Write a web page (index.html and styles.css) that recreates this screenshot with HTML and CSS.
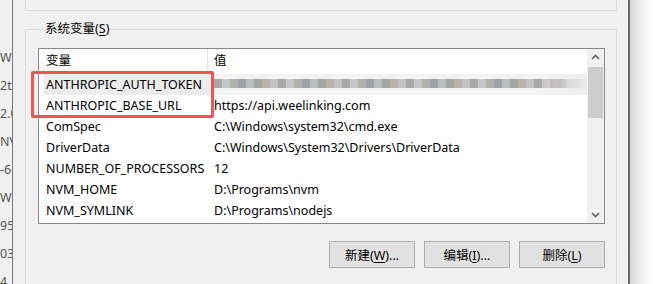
FILE: index.html
```html
<!DOCTYPE html>
<html>

<head>
    <meta http-equiv="Content-Type" content="text/html;charset=UTF-8">
    <title>环境变量</title>
    <link rel="stylesheet" href="styles.css">
</head>

<body>
    <div class="behind">
        <p>WINDIR</p>
        <p>2th</p>
        <p>2.0</p>
        <p>NVM</p>
        <p>-66</p>
        <p>WD</p>
        <p>95</p>
        <p>03</p>
        <p>4</p>
    </div>
    <div class="edge"></div>

    <div class="dialog">
        <div class="prev-group"></div>

        <div class="group">
            <span class="legend">系统变量(<u>S</u>)</span>

            <div class="list">
                <div class="list-body">
                    <div class="head">
                        <div class="col1">变量</div>
                        <div class="col2">值</div>
                    </div>
                    <div class="row sel">
                        <div class="col1">ANTHROPIC_AUTH_TOKEN</div>
                        <div class="col2"><div class="blur"></div></div>
                    </div>
                    <div class="row">
                        <div class="col1">ANTHROPIC_BASE_URL</div>
                        <div class="col2">https://api.weelinking.com</div>
                    </div>
                    <div class="row">
                        <div class="col1">ComSpec</div>
                        <div class="col2">C:\Windows\system32\cmd.exe</div>
                    </div>
                    <div class="row">
                        <div class="col1">DriverData</div>
                        <div class="col2">C:\Windows\System32\Drivers\DriverData</div>
                    </div>
                    <div class="row">
                        <div class="col1">NUMBER_OF_PROCESSORS</div>
                        <div class="col2">12</div>
                    </div>
                    <div class="row">
                        <div class="col1">NVM_HOME</div>
                        <div class="col2">D:\Programs\nvm</div>
                    </div>
                    <div class="row">
                        <div class="col1">NVM_SYMLINK</div>
                        <div class="col2">D:\Programs\nodejs</div>
                    </div>
                </div>
                <div class="scrollbar">
                    <svg width="17" height="17" viewBox="0 0 17 17"><path d="M5 10 L8.5 6.5 L12 10" fill="none" stroke="#606060" stroke-width="1.6"/></svg>
                    <div class="track"><div class="thumb"></div></div>
                    <svg width="17" height="17" viewBox="0 0 17 17"><path d="M5 7 L8.5 10.5 L12 7" fill="none" stroke="#606060" stroke-width="1.6"/></svg>
                </div>
                <div class="mark"></div>
            </div>

            <div class="buttons">
                <button class="btn">新建(<u>W</u>)...</button>
                <button class="btn">编辑(<u>I</u>)...</button>
                <button class="btn">删除(<u>L</u>)</button>
            </div>
        </div>
    </div>

    <div class="edge dark"></div>
    <div class="shadow"></div>
</body>

</html>
```

FILE: styles.css
```css
* {
    box-sizing: border-box;
    margin: 0;
    padding: 0;
}

body {
    width: 653px;
    height: 284px;
    overflow: hidden;
    display: flex;
    background: #ffffff;
    font-family: "Noto Sans", "Noto Sans CJK SC", sans-serif;
    font-size: 12.5px;
    color: #000;
}

.behind {
    width: 12px;
    overflow: hidden;
    background: #f0f0f0;
    color: #555;
    padding-top: 44px;
    white-space: nowrap;
}

.behind p {
    line-height: 28px;
}

.edge {
    width: 1px;
    background: #7a7a7a;
}

.edge.dark {
    width: 2px;
    background: #6a6a6a;
}

.shadow {
    flex: 1;
    background: linear-gradient(90deg, #d6d6d6, #ececec 40%, #fafafa 80%, #ffffff);
}

.dialog {
    width: 615px;
    background: #f0f0f0;
    padding: 0 11px 0 12px;
}

.prev-group {
    height: 11px;
    border: 1px solid #dcdcdc;
    border-top: none;
}

.group {
    margin-top: 18px;
    border: 1px solid #dcdcdc;
    border-bottom: none;
    height: 255px;
    padding: 0 11px 0 12px;
}

.legend {
    display: inline-block;
    margin: -9px 0 0 6px;
    padding: 0 1px;
    background: #f0f0f0;
    line-height: 16px;
    vertical-align: top;
}

.list {
    position: relative;
    margin-top: 1px;
    height: 176px;
    border: 1px solid #828790;
    background: #fff;
    display: flex;
}

.list-body {
    flex: 1;
    overflow: hidden;
}

.head,
.row {
    display: flex;
    white-space: nowrap;
}

.head {
    height: 25px;
    line-height: 23px;
}

.head .col1 {
    border-right: 1px solid #e5e5e5;
}

.row {
    height: 21px;
    line-height: 21px;
}

.col1 {
    width: 169px;
    padding-left: 7px;
}

.col2 {
    flex: 1;
    padding-left: 6px;
}

.row.sel {
    margin-left: 5px;
    background: #ececec;
}

.row.sel .col1 {
    width: 164px;
    padding-left: 2px;
}

.blur {
    height: 21px;
    width: 372px;
    background:
        linear-gradient(90deg, rgba(236, 236, 236, 0) 88%, #ececec),
        linear-gradient(180deg, #f3f3f3 0 5px, transparent 5px 14px, #f3f3f3 14px),
        repeating-linear-gradient(90deg, #a8a8a8 0 8px, #c6c6c6 8px 16px, #b4b0ac 16px 24px, #9fa3a8 24px 32px, #bcbcbc 32px 40px, #a4a6a2 40px 48px, #b9b0aa 48px 56px, #c2c2c2 56px 64px) 0 5px / 100% 9px no-repeat,
        repeating-linear-gradient(90deg, #e0e0e0 0 8px, #d8d8d8 8px 16px, #e6e6e6 16px 24px, #dcdcdc 24px 32px, #e8e8e8 32px 40px, #d6d6d6 40px 48px) 0 14px / 100% 7px no-repeat;
}

/* red highlight drawn over the first two rows */
.mark {
    position: absolute;
    left: -8px;
    top: 22px;
    width: 183px;
    height: 47px;
    border: 3px solid #f05454;
    border-radius: 2px;
}

.scrollbar {
    width: 17px;
    background: #f0f0f0;
    display: flex;
    flex-direction: column;
}

.track {
    flex: 1;
    padding: 1px 1px 0 1px;
}

.thumb {
    height: 51px;
    background: #cdcdcd;
}

.buttons {
    display: flex;
    justify-content: flex-end;
    gap: 9px;
    margin-top: 17px;
}

.btn {
    width: 86px;
    height: 27px;
    background: #e1e1e1;
    border: 1px solid #adadad;
    font-family: inherit;
    font-size: 12.5px;
    color: #000;
}

u {
    text-underline-offset: 2px;
}
```
